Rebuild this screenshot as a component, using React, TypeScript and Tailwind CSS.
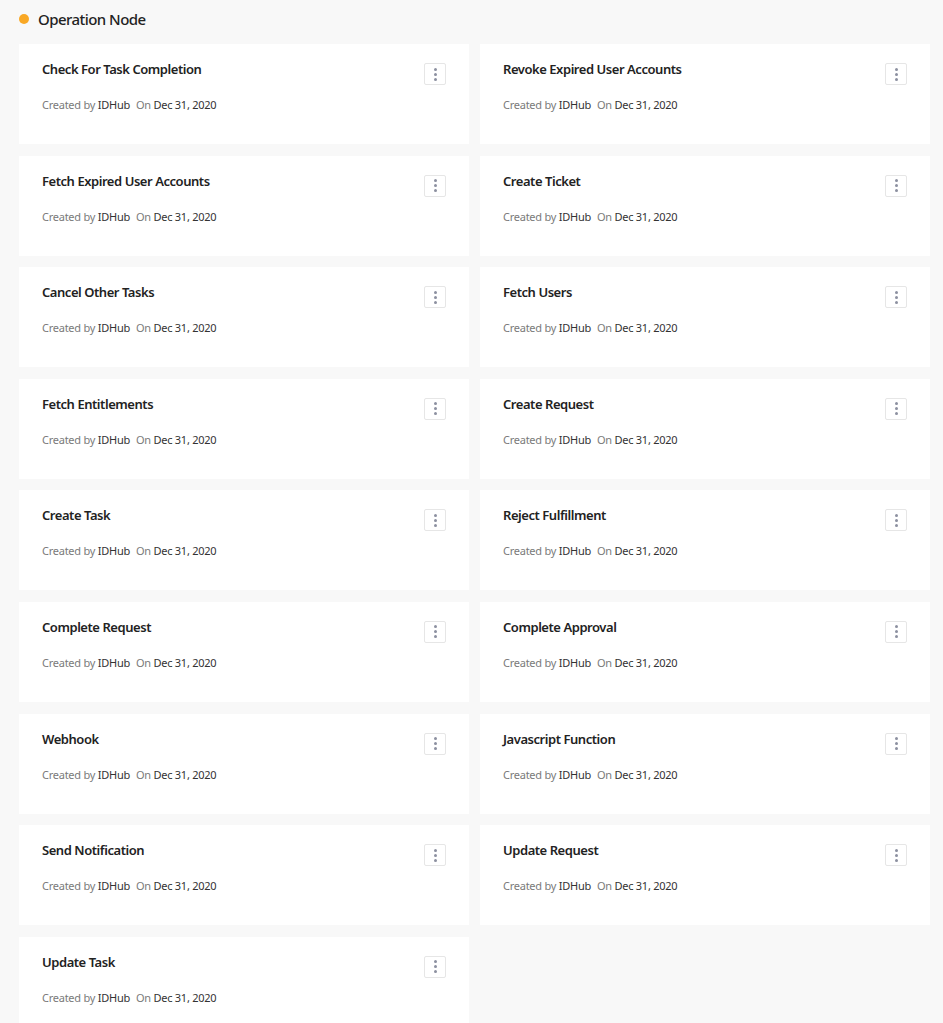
import React from 'react';

const nodes = [
  'Check For Task Completion',
  'Revoke Expired User Accounts',
  'Fetch Expired User Accounts',
  'Create Ticket',
  'Cancel Other Tasks',
  'Fetch Users',
  'Fetch Entitlements',
  'Create Request',
  'Create Task',
  'Reject Fulfillment',
  'Complete Request',
  'Complete Approval',
  'Webhook',
  'Javascript Function',
  'Send Notification',
  'Update Request',
  'Update Task',
];

const NodeCard: React.FC<{ title: string }> = ({ title }) => (
  <div className="bg-white h-[100px] pl-[23px] pr-[23px] pt-[16px] flex justify-between">
    <div className="flex flex-col">
      <div className="text-[13px] leading-[18px] font-semibold text-[#222] tracking-[-0.45px]">{title}</div>
      <div className="mt-[19px] text-[11px] leading-[16px] tracking-[-0.25px]">
        <span className="text-[#7a7a7a]">Created by </span>
        <span className="text-[#333]">IDHub</span>
        <span className="text-[#7a7a7a] ml-[6px]">On </span>
        <span className="text-[#333]">Dec 31, 2020</span>
      </div>
    </div>
    <button className="mt-[3px] w-[22px] h-[22px] border border-[#e6e6e6] rounded-[2px] flex flex-col items-center justify-center gap-[2px] bg-white">
      <span className="w-[3px] h-[3px] rounded-full bg-[#8c90a0]" />
      <span className="w-[3px] h-[3px] rounded-full bg-[#8c90a0]" />
      <span className="w-[3px] h-[3px] rounded-full bg-[#8c90a0]" />
    </button>
  </div>
);

export default function App() {
  return (
    <div
      className="min-h-screen bg-[#f8f8f8] pl-[19px] pr-[13px]"
      style={{ fontFamily: '"Noto Sans", "Open Sans", sans-serif' }}
    >
      <div className="h-[38px] mb-[6px] flex items-center">
        <span className="w-[10px] h-[10px] rounded-full bg-[#f9a825]" />
        <span className="ml-[9px] text-[15px] font-medium text-[#222] tracking-[-0.55px]">Operation Node</span>
      </div>
      <div className="grid grid-cols-2 gap-x-[11px] gap-y-[11.6px]">
        {nodes.map((n) => (
          <NodeCard key={n} title={n} />
        ))}
      </div>
    </div>
  );
}
